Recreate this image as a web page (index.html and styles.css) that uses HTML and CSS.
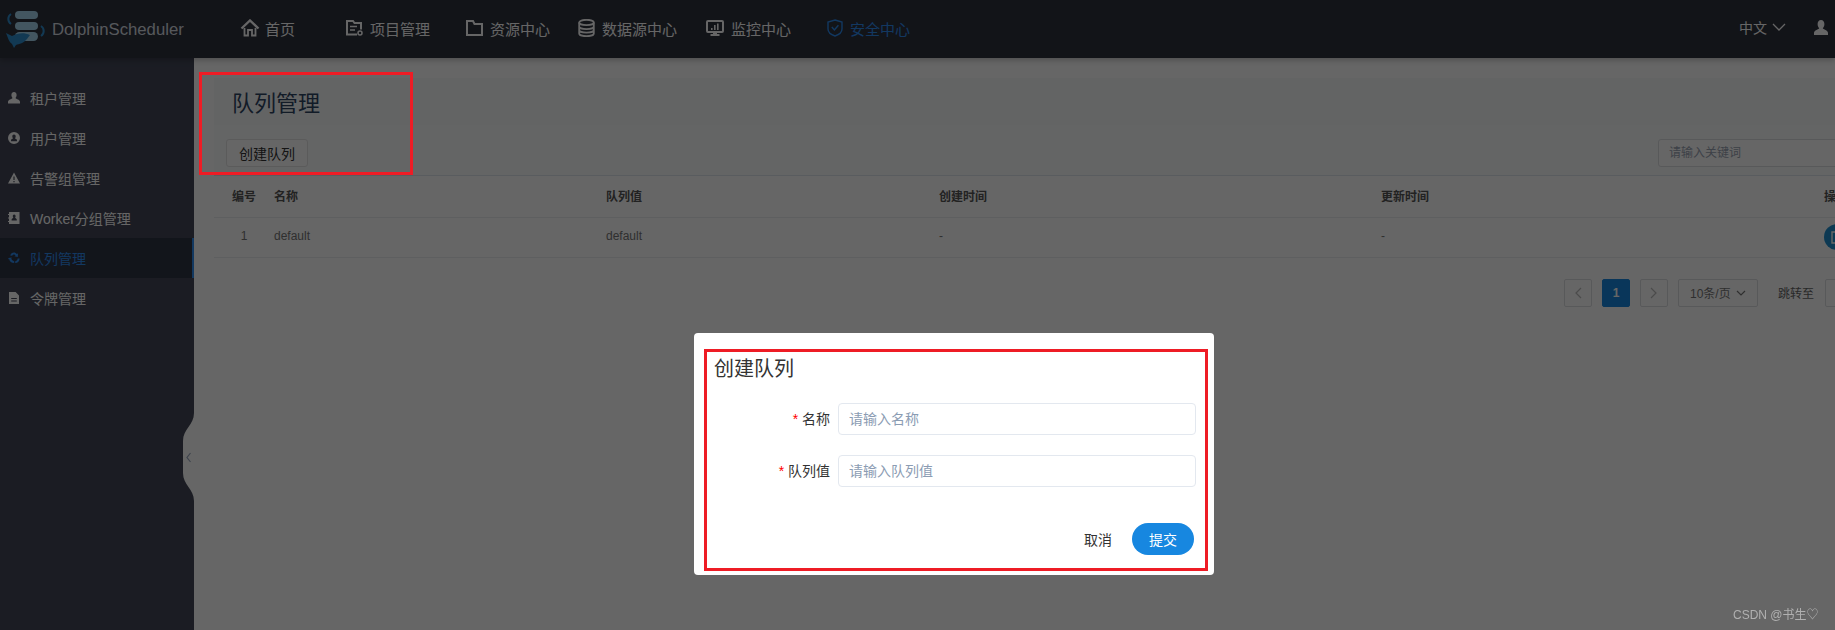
FILE: index.html
```html
<!DOCTYPE html>
<html>
<head>
    <meta charset="utf-8" />
    <link rel="stylesheet" href="styles.css">
    <title>队列管理</title>
</head>

<body>
    <header class="topbar">
        <div class="logo">
            <svg class="logo-mark" width="44" height="38" viewBox="0 0 44 38">
                <rect x="11" y="0" width="23" height="8" rx="4" fill="#a9d8f0"/>
                <rect x="11" y="11" width="23" height="8" rx="4" fill="#a9d8f0"/>
                <rect x="11" y="21" width="23" height="9" rx="4.5" fill="#a9d8f0"/>
                <path d="M7 3 A6 6 0 0 0 7 13" fill="none" stroke="#2f8fd0" stroke-width="2"/>
                <path d="M37 15 A6 6 0 0 1 37 25" fill="none" stroke="#2f8fd0" stroke-width="2"/>
                <path d="M2 22 L8 25 C13 22 20 21 26 24 L23 28 C20 32 15 33 12 34 L10 37 L8 33 C5 31 4 27 2 22Z" fill="#2f8fd0"/>
            </svg>
            <span class="logo-text">DolphinScheduler</span>
        </div>
        <nav class="nav">
            <a class="nav-item">
                <svg class="nav-icon" width="20" height="18" viewBox="0 0 20 18"><path d="M1.500 9.500 L10 1.500 L18.500 9.500" fill="none" stroke="currentColor" stroke-width="2.400"/><path d="M4.500 9 V16.500 H8 V11 H12 V16.500 H15.500 V9" fill="none" stroke="currentColor" stroke-width="1.800"/></svg>
                首页
            </a>
            <a class="nav-item">
                <svg class="nav-icon" width="17" height="16" viewBox="0 0 17 16"><path d="M11 14.500 H1 V1 H7 L8.500 3 H15 V9.500" fill="none" stroke="currentColor" stroke-width="2"/><path d="M4 6.500 H11 M4 10 H9" stroke="currentColor" stroke-width="1.500"/><circle cx="14" cy="13" r="2" fill="none" stroke="currentColor" stroke-width="1.500"/></svg>
                项目管理
            </a>
            <a class="nav-item">
                <svg class="nav-icon" width="17" height="16" viewBox="0 0 17 16"><path d="M1 15 V1 H7 L8.500 4 H16 V15Z" fill="none" stroke="currentColor" stroke-width="2"/></svg>
                资源中心
            </a>
            <a class="nav-item">
                <svg class="nav-icon" width="17" height="18" viewBox="0 0 17 18"><ellipse cx="8.500" cy="3.500" rx="7.300" ry="2.700" fill="none" stroke="currentColor" stroke-width="1.800"/><path d="M1.200 3.500 V14.500 C1.200 16 4.500 17.200 8.500 17.200 C12.500 17.200 15.800 16 15.800 14.500 V3.500 M1.200 7.500 C1.200 9 4.500 10.200 8.500 10.200 C12.500 10.200 15.800 9 15.800 7.500 M1.200 11 C1.200 12.500 4.500 13.700 8.500 13.700 C12.500 13.700 15.800 12.500 15.800 11" fill="none" stroke="currentColor" stroke-width="1.800"/></svg>
                数据源中心
            </a>
            <a class="nav-item">
                <svg class="nav-icon" width="18" height="16" viewBox="0 0 18 16"><rect x="1" y="1" width="16" height="11" rx="1" fill="none" stroke="currentColor" stroke-width="2"/><path d="M5 10 V8 H6.600 V10Z M8 10 V5 H9.600 V10Z M11 10 V3.500 H12.600 V10Z" fill="currentColor"/><path d="M7 12 V14 H4.500 V16 H13.500 V14 H11 V12" fill="currentColor"/></svg>
                监控中心
            </a>
            <a class="nav-item active">
                <svg class="nav-icon" width="16" height="18" viewBox="0 0 16 18"><path d="M8 1 L15 3 V10 C15 13.500 11 16 8 17 C5 16 1 13.500 1 10 V3Z" fill="none" stroke="currentColor" stroke-width="1.400"/><path d="M4.800 8 L7.400 11 L11.400 6.200" fill="none" stroke="currentColor" stroke-width="1.400"/></svg>
                安全中心
            </a>
        </nav>
        <div class="lang">
            中文
            <svg width="14" height="8" viewBox="0 0 14 8"><path d="M1 1 L7 7 L13 1" fill="none" stroke="currentColor" stroke-width="1.300"/></svg>
        </div>
        <div class="account">
            <svg width="14" height="15" viewBox="0 0 14 15"><path d="M7 0 C9.200 0 10.400 1.800 10.400 4 C10.400 6 9.600 7.400 8.800 8.200 C9.200 9.400 14 10 14 13 V15 H0 V13 C0 10 4.800 9.400 5.200 8.200 C4.400 7.400 3.600 6 3.600 4 C3.600 1.800 4.800 0 7 0Z" fill="currentColor"/></svg>
        </div>
    </header>

    <div class="layout">
        <aside class="sidebar">
            <a class="side-item">
                <svg class="side-icon" viewBox="0 0 12 12"><path d="M6 0 C7.800 0 8.600 1.400 8.600 3 C8.600 4.400 8 5.400 7.400 6 C7.800 7 12 7.400 12 10 V11.500 H0 V10 C0 7.400 4.200 7 4.600 6 C4 5.400 3.400 4.400 3.400 3 C3.400 1.400 4.200 0 6 0Z"/></svg>
                租户管理
            </a>
            <a class="side-item">
                <svg class="side-icon" viewBox="0 0 12 12"><path fill-rule="evenodd" d="M6 0 A6 6 0 1 1 6 12 A6 6 0 1 1 6 0Z M6 2.400 C4.900 2.400 4.300 3.200 4.300 4.400 C4.300 5.200 4.600 5.800 5 6.200 C4.600 6.800 3 7 3 8.400 V9.200 H9 V8.400 C9 7 7.400 6.800 7 6.200 C7.400 5.800 7.700 5.200 7.700 4.400 C7.700 3.200 7.100 2.400 6 2.400Z"/></svg>
                用户管理
            </a>
            <a class="side-item">
                <svg class="side-icon" viewBox="0 0 12 12"><path fill-rule="evenodd" d="M6 0.500 L12 11.500 H0Z M5.400 4.500 V8 H6.600 V4.500Z M5.400 9 V10.200 H6.600 V9Z"/></svg>
                告警组管理
            </a>
            <a class="side-item">
                <svg class="side-icon" viewBox="0 0 12 12"><path fill-rule="evenodd" d="M1 0 H11.500 V12 H1 V10 H0 V9 H1 V6.500 H0 V5.500 H1 V3 H0 V2 H1Z M6.200 2.600 C5.200 2.600 4.800 3.400 4.800 4.200 C4.800 4.900 5.100 5.400 5.400 5.700 C5 6.200 3.600 6.400 3.600 7.600 V8.600 H8.800 V7.600 C8.800 6.400 7.400 6.200 7 5.700 C7.300 5.400 7.600 4.900 7.600 4.200 C7.600 3.400 7.200 2.600 6.200 2.600Z"/></svg>
                Worker分组管理
            </a>
            <a class="side-item active">
                <svg class="side-icon" viewBox="0 0 12 12"><path d="M6 0.500 C7.200 0.500 8 1 8.600 2 L10 1.400 L9.800 5 L6.400 4.200 L7.600 3.400 C7.200 2.700 6.600 2.400 6 2.400 C5.200 2.400 4.400 3 4.200 3.800 L2.200 3.400 C2.800 1.600 4.200 0.500 6 0.500Z M11.600 6.500 C11.600 9 9.800 11 7.200 11 V9.200 C8.600 9 9.600 8 9.700 6.500Z M0.400 6 L3.800 5.400 L3.300 6.600 C3.700 8 4.800 9 6.200 9.200 V11.100 C3.500 11 1.500 9.200 1.300 7.200 L0.400 7.200Z"/></svg>
                队列管理
            </a>
            <a class="side-item">
                <svg class="side-icon" viewBox="0 0 12 12"><path fill-rule="evenodd" d="M1 0 H7.600 L11 3.400 V12 H1Z M3.200 6 V7 H8.800 V6Z M3.200 8.400 V9.400 H8.800 V8.400Z"/></svg>
                令牌管理
            </a>
        </aside>

        <main class="content">
            <div class="title-band">
                <h1 class="page-title">队列管理</h1>
            </div>
            <div class="toolbar">
                <button type="button" class="btn-plain">创建队列</button>
                <input class="search" type="text" placeholder="请输入关键词" />
            </div>
            <table class="list">
                <thead>
                    <tr>
                        <th class="col-num">编号</th>
                        <th class="col-name">名称</th>
                        <th class="col-value">队列值</th>
                        <th class="col-create">创建时间</th>
                        <th class="col-update">更新时间</th>
                        <th class="col-op">操作</th>
                    </tr>
                </thead>
                <tbody>
                    <tr>
                        <td class="col-num">1</td>
                        <td>default</td>
                        <td>default</td>
                        <td>-</td>
                        <td>-</td>
                        <td>
                            <span class="round-btn">
                                <svg width="13" height="13" viewBox="0 0 13 13"><path d="M1 1 H10 V12 H1Z" fill="none" stroke="#fff" stroke-width="1.400"/></svg>
                            </span>
                        </td>
                    </tr>
                </tbody>
            </table>
            <div class="pager">
                <span class="page-btn"><svg width="8" height="12" viewBox="0 0 8 12"><path d="M7 1 L2 6 L7 11" fill="none" stroke="currentColor" stroke-width="1.200"/></svg></span>
                <span class="page-btn current">1</span>
                <span class="page-btn"><svg width="8" height="12" viewBox="0 0 8 12"><path d="M1 1 L6 6 L1 11" fill="none" stroke="currentColor" stroke-width="1.200"/></svg></span>
                <span class="page-size">10条/页
                    <svg width="10" height="6" viewBox="0 0 10 6"><path d="M1 1 L5 5 L9 1" fill="none" stroke="currentColor" stroke-width="1.200"/></svg>
                </span>
                <span class="page-jump">跳转至</span>
                <span class="jump-input"></span>
            </div>
        </main>
    </div>

    <svg class="side-toggle" width="11" height="88" viewBox="0 0 11 88">
        <path d="M11 0 C11 12 0 16 0 28 V60 C0 72 11 76 11 88Z" fill="#fff"/>
        <path d="M7.500 40 L4 44.500 L7.500 49" fill="none" stroke="#9aa8c0" stroke-width="1.200"/>
    </svg>

    <div class="mask"></div>

    <div class="annotation"></div>

    <div class="modal">
        <form class="modal-box">
            <div class="modal-title">创建队列</div>
            <div class="field">
                <label class="field-label"><span class="star">*</span> 名称</label>
                <input class="field-input" type="text" placeholder="请输入名称" />
            </div>
            <div class="field">
                <label class="field-label"><span class="star">*</span> 队列值</label>
                <input class="field-input" type="text" placeholder="请输入队列值" />
            </div>
            <div class="modal-foot">
                <button type="button" class="btn-text">取消</button>
                <button type="button" class="btn-submit">提交</button>
            </div>
        </form>
    </div>

    <div class="watermark">CSDN @书生♡</div>
</body>
</html>
```

FILE: styles.css
```css
* {
    box-sizing: border-box;
}
body {
    margin: 0;
    height: 630px;
    overflow: hidden;
    background: #fff;
    font-family: "Liberation Sans", "Noto Sans CJK SC", sans-serif;
    font-size: 12px;
    color: #666;
}

/* top bar */
.topbar {
    position: relative;
    z-index: 2;
    display: flex;
    height: 58px;
    background: #2d323e;
    box-shadow: 0 2px 6px rgba(0, 0, 0, 0.25);
    color: #fff;
}
.logo {
    display: flex;
    width: 240px;
    padding: 11px 0 0 4px;
}
.logo-mark {
    flex: none;
}
.logo-text {
    margin: 9px 0 0 4px;
    font-size: 16.7px;
    color: #d8dde3;
}
.nav {
    display: grid;
    grid-template-columns: 106px 120px 112px 128px 121px 100px;
    width: 1499px;
}
.nav-item {
    display: flex;
    align-items: center;
    height: 56px;
    font-size: 15px;
    white-space: nowrap;
}
.nav-icon {
    margin-right: 7px;
}
.nav-item:first-child .nav-icon {
    margin-right: 5px;
}
.nav-item.active {
    color: #2d8cf0;
}
.lang {
    display: flex;
    align-items: center;
    gap: 5px;
    width: 75px;
    height: 54px;
    font-size: 14px;
}
.account {
    display: flex;
    align-items: center;
    height: 54px;
}

.layout {
    display: flex;
    height: 572px;
}

/* left menu */
.sidebar {
    flex: none;
    width: 194px;
    padding-top: 20px;
    background: #444858;
}
.side-item {
    display: flex;
    align-items: center;
    height: 40px;
    padding-left: 8px;
    font-size: 14px;
    color: #fff;
}
.side-item.active {
    background: #2f3544;
    border-right: 2px solid #2d8cf0;
    color: #2d8cf0;
}
.side-icon {
    width: 12px;
    height: 12px;
    margin-right: 10px;
    fill: currentColor;
}

/* page */
.content {
    flex: none;
    width: 1680px;
    padding: 20px 0 0 20px;
}
.title-band {
    height: 47px;
    padding-left: 18px;
    background: #f8f9fb;
}
.page-title {
    margin: 0;
    font-size: 22px;
    font-weight: normal;
    line-height: 52px;
    color: #2d4563;
}
.toolbar {
    display: flex;
    justify-content: space-between;
    height: 51px;
    padding: 14px 0 0 12px;
    background: #fbfcfd;
    border-bottom: 1px solid #dfe6ee;
}
.btn-plain {
    width: 82px;
    height: 28px;
    padding: 0;
    background: #fff;
    border: 1px solid #e4e4e4;
    border-radius: 3px;
    font-family: inherit;
    font-size: 14px;
    color: #333;
}
.search {
    width: 200px;
    height: 28px;
    margin-right: 16px;
    padding: 0 10px;
    border: 1px solid #dcdee2;
    border-radius: 3px;
    font-family: inherit;
    font-size: 12px;
}
.search::placeholder {
    color: #9aa3b2;
}

/* table */
.list {
    width: 1676px;
    table-layout: fixed;
    border-collapse: collapse;
}
.list th, .list td {
    height: 40px;
    padding: 0 0 2px;
    border-bottom: 1px solid #eceef1;
    text-align: left;
    font-size: 12px;
    color: #777;
}
.list td:last-child {
    padding: 0;
}
.list th {
    height: 41px;
    color: #555;
}
.list .col-num {
    width: 60px;
    text-align: center;
}
.col-name { width: 332px; }
.col-value { width: 333px; }
.col-create { width: 442px; }
.col-update { width: 443px; }
.col-op { width: 66px; }
.round-btn {
    display: flex;
    align-items: center;
    justify-content: center;
    width: 26px;
    height: 26px;
    border-radius: 50%;
    background: #2190d0;
}

/* pagination */
.pager {
    display: flex;
    align-items: center;
    height: 28px;
    margin-top: 21px;
    padding-left: 1350px;
    font-size: 12px;
}
.page-btn {
    display: flex;
    align-items: center;
    justify-content: center;
    width: 28px;
    height: 28px;
    margin-right: 10px;
    border: 1px solid #dcdee2;
    border-radius: 2px;
    color: #bbb;
}
.page-btn.current {
    background: #1787e0;
    border-color: #1787e0;
    font-weight: bold;
    color: #fff;
}
.page-size {
    display: flex;
    align-items: center;
    justify-content: space-between;
    width: 80px;
    height: 28px;
    padding: 0 11px 0 11px;
    border: 1px solid #dcdee2;
    border-radius: 2px;
    color: #777;
}
.page-jump {
    margin: 0 11px 0 20px;
    color: #666;
}
.jump-input {
    width: 40px;
    height: 28px;
    border: 1px solid #dcdee2;
    border-radius: 2px;
}

/* over the page */
.side-toggle {
    position: absolute;
    left: 183px;
    top: 413px;
    z-index: 3;
}
.mask {
    position: fixed;
    top: 0;
    left: 0;
    right: 0;
    bottom: 0;
    z-index: 4;
    background: rgba(0, 0, 0, 0.6);
}
.annotation {
    position: absolute;
    left: 199px;
    top: 72px;
    z-index: 5;
    width: 214px;
    height: 103px;
    border: 3px solid #ee1c25;
}
.modal {
    position: absolute;
    left: 694px;
    top: 333px;
    z-index: 5;
    width: 520px;
    height: 242px;
    padding: 16px 6px 4px 10px;
    background: #fff;
    border-radius: 4px;
}
.modal-box {
    height: 222px;
    padding: 0 7px 0 7px;
    border: 3px solid #ee1c25;
}
.modal-title {
    height: 51px;
    padding-top: 2px;
    font-size: 20px;
    line-height: 30px;
    color: #333;
}
.field {
    display: flex;
    gap: 8px;
    height: 32px;
    margin-bottom: 20px;
}
.field-label {
    width: 116px;
    text-align: right;
    font-size: 14px;
    line-height: 32px;
    color: #333;
}
.star {
    color: #f00;
}
.field-input {
    width: 358px;
    height: 32px;
    padding: 0 10px;
    border: 1px solid #e3e8ef;
    border-radius: 4px;
    font-family: inherit;
    font-size: 14px;
}
.field-input::placeholder {
    color: #8b9cb3;
}
.modal-foot {
    display: flex;
    justify-content: flex-end;
    align-items: center;
    gap: 20px;
    height: 32px;
    margin-top: 36px;
    padding-right: 4px;
}
.btn-text {
    padding: 0;
    background: none;
    border: none;
    font-family: inherit;
    font-size: 14px;
    color: #333;
}
.btn-submit {
    width: 62px;
    height: 32px;
    padding: 0;
    background: #1787e0;
    border: none;
    border-radius: 16px;
    font-family: inherit;
    font-size: 14px;
    color: #fff;
}
.watermark {
    position: absolute;
    left: 1733px;
    top: 605px;
    z-index: 5;
    font-size: 12px;
    color: #b0b0b0;
}
```
